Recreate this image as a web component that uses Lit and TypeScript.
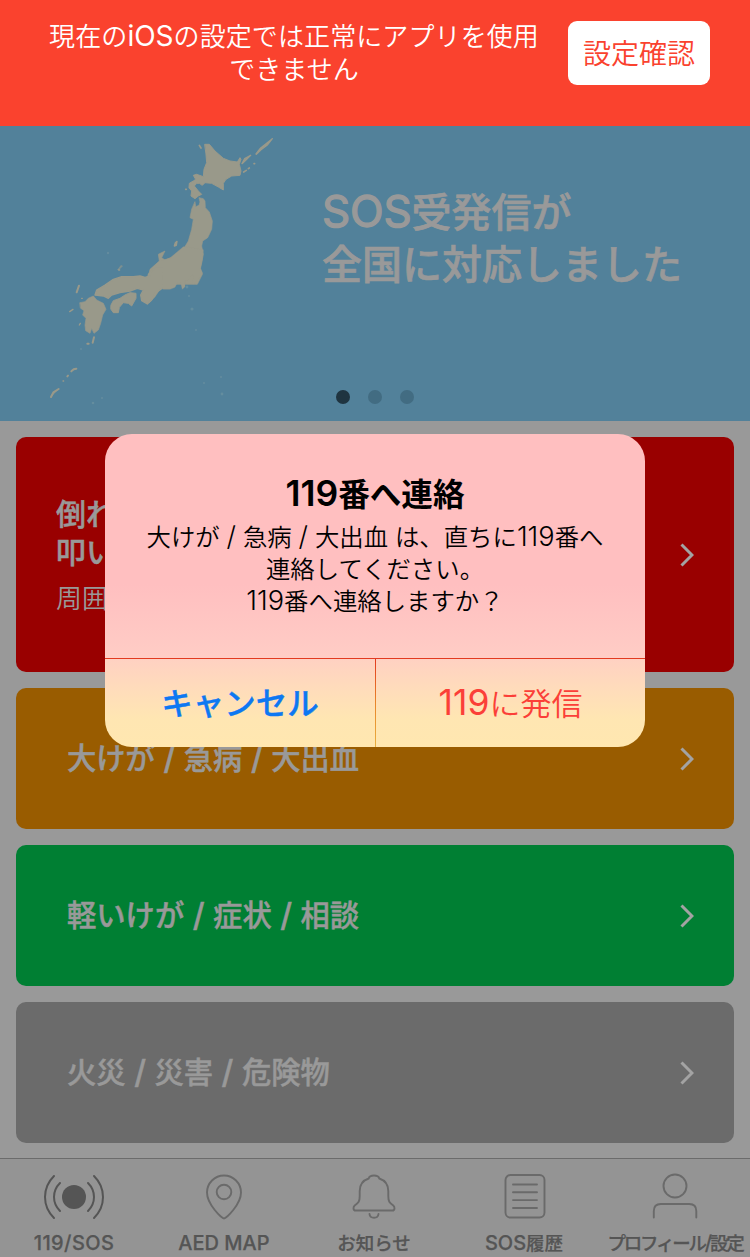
import { LitElement, html, svg, css } from "lit";
import { customElement, property } from "lit/decorators.js";

/** Splits a string into latin and Japanese runs so each can be sized on its own. */
const runs = (text: string) =>
  (text.match(/[\x20-\x7e]+|[^\x20-\x7e]+/g) ?? []).map(
    (r) => html`<span class=${/^[\x20-\x7e]/.test(r) ? "latin" : "ja"}>${r}</span>`
  );

const base = css`
  * { box-sizing: border-box; }
  .latin, .ja { white-space: pre; }
  svg { display: block; }
`;

@customElement("warning-banner")
class WarningBanner extends LitElement {
  static styles = [base, css`
    :host { display: flex; height: 126px; background: #fa422e; align-items: flex-start; }
    .msg { width: 588px; padding-top: 20px; text-align: center; color: #fff; font-size: 26px; line-height: 33px; font-weight: 350; }
    .msg .latin { font-size: 28px; font-weight: 400; }
    .msg .ja { letter-spacing: .1px; }
    .msg div { height: 33px; white-space: nowrap; }
    .btn { margin: 21px 0 0 -20px; width: 142px; height: 64px; border: 0; padding: 3px 0 0; border-radius: 9px; background: #fff; color: #fa422e; font: 350 28px/61px Inter, "Noto Sans CJK JP", sans-serif; }
  `];
  render() {
    return html`
      <div class="msg"><div>${runs("現在のiOSの設定では正常にアプリを使用")}</div><div>${runs("できません")}</div></div>
      <button class="btn">設定確認</button>`;
  }
}

@customElement("hero-slide")
class HeroSlide extends LitElement {
  static styles = [base, css`
    :host { display: grid; grid-template-columns: 322px 1fr; grid-template-rows: 264px 31px; height: 295px; background: #52819a; }
    .map { grid-row: 1 / 3; }
    .copy { padding-top: 58px; font-size: 40px; line-height: 54px; font-weight: 500; color: #999; }
    .copy div { height: 54px; white-space: nowrap; }
    .copy .ja { -webkit-text-stroke: .7px #999; }
    .copy .latin { font-size: 44px; font-weight: 400; letter-spacing: -.2px; -webkit-text-stroke: 1.3px #999; }
    .dots { grid-column: 2; display: flex; gap: 18px; padding-left: 14px; }
    .dot { width: 14px; height: 14px; border-radius: 50%; background: #426c82; }
    .dot.on { background: #1f3440; }
  `];
  render() {
    return html`
      <svg class="map" width="300" height="295" viewBox="0 126 300 295">
        <g fill="#99998a" stroke="#99998a" stroke-linejoin="round" stroke-linecap="round">
          <g transform="translate(150 126) scale(.33333)">
            <path d="M165 55l13 0 17 20 25 22 20 8 22 3 8-13 3 5-5 15 5 20-3 13-25 2-17 10-8 12v20l-15-9-20-11-20-2-8 8-9-6h-8l-7 8 12 15 10 10-10 5-10 8-12-8 2-15-8-10 1-13 12-7 7-5-7-12 10-3 20 7 2-22 8-20-2-25z" stroke-width="3"/>
            <path d="M135 228l2 14 10-4 3-10-3-13 13 3 5 7 1 20 12 13 9 27-2 25-12 25-15 10-3 15 5 25-5 25-5 20 7 15-15 30H-10L0 430l28-25-3-20 20-10-10 20 10 7 30-12 25-20 15-25 10-35 5-30-10-5 5-25z" stroke-width="2"/>
            <path d="M73 360l3-10 5-4-2 12zM276 113l8-15 18-10-15 15zM318 84l14-18 35-28-14 18-20 15-14 14z" stroke-width="4"/>
            <path d="M148 58l5 8M281 138l8-5M295 128l3-2M312 113h2M107 190h2" stroke-width="5"/>
          </g>
          <g transform="translate(150 250) scale(.33333)">
            <path d="M160 0l-3 30-5 25 6 15-10 15-18 18-5-8 8-17-8-3-10 15-10 2v18l-8 8-5-20H82l-7 14-15 6H40l-12-7-3 15-10 15-17 17-20-5L-6 72 28 34 60 24 100-10z"/>
          </g>
          <g transform="translate(30 270) scale(.33333)">
            <path d="M396 55l-21 15-10 20-13 12-17-10-3-17 8-15-18-5-22 8-30 5-25 7-10 10-15-7-25-3 5-15 25-15 25-17 25-8h35l20-2 15 4 15-4 2-13 14-10 20 0z" stroke-width="4"/>
            <path d="M243 105l7-13 20-7 15-10 15-7 18 2v15l-13 23-10-8-15-2-12 14-3 16h-15l-7-10z" stroke-width="3"/>
            <path d="M150 98l15-3 10-10 15-7 10 12 20 10 8 18-10 17-6 25-7 20-13 10-7-15-5 15-13-8-2-17 3-20-10-10 4-13-10-7z" stroke-width="2"/>
            <path d="M140 67l7-20M63 381l7-14 16-10M112 319l2-2M124 304l7-6 8-2M188 218l4-16M172 221h4" stroke-width="6"/>
            <path d="M119 125l10-7M148 165l3-5M155 85h2M99 333h2M266 0h3" stroke-width="4"/>
          </g>
        </g>
        <g fill="#7095a2" opacity=".6">
          <circle cx="187" cy="287" r="1.4"/><circle cx="192" cy="309" r="1.6"/><circle cx="189" cy="296" r="1"/>
          <circle cx="196" cy="330" r=".9"/><circle cx="204" cy="383" r="1"/><circle cx="222" cy="394" r="1.4"/><circle cx="221" cy="377" r="1"/>
          <circle cx="93" cy="403" r="1.3"/><circle cx="102" cy="398" r="1"/><circle cx="81" cy="349" r="1"/>
          <circle cx="108" cy="253" r="1.2"/><path d="M117 270l4-5 2 1-4 4z" fill="#99998a"/>
        </g>
      </svg>
      <div class="copy"><div>${runs("SOS受発信が")}</div><div>${runs("全国に対応しました")}</div></div>
      <div class="dots"><i class="dot on"></i><i class="dot"></i><i class="dot"></i></div>`;
  }
}

@customElement("menu-card")
class MenuCard extends LitElement {
  @property() tone = "";
  static styles = [base, css`
    :host { display: block; }
    .card { display: flex; align-items: center; justify-content: space-between; height: 141px; border-radius: 10px; padding: 0 40px 0 51px; color: #999; font-size: 29.3px; font-weight: 500; white-space: nowrap; -webkit-text-stroke: .5px #999; }
    .red { height: 235px; background: #990000; padding-left: 40px; }
    .orange { background: #995c00; }
    .green { background: #007f33; }
    .grey { background: #6b6b6b; }
  `];
  render() {
    return html`<div class="card ${this.tone}"><slot></slot>
      <svg width="14" height="24" viewBox="0 0 14 24" fill="none" stroke="#a3a3a3" stroke-width="3"><path d="M1.5 1.5L12 12 1.5 22.5"/></svg>
    </div>`;
  }
}

@customElement("call-dialog")
class CallDialog extends LitElement {
  static styles = [base, css`
    :host { display: block; }
    .box { width: 540px; height: 313px; border-radius: 27px; overflow: hidden; text-align: center; color: #000;
      background: linear-gradient(180deg, #ffbfc0 0, #ffbfc0 150px, #ffc9c4 205px, #ffcdc5 224px, #ffd1c2 225px, #ffdcbb 255px, #ffe6b2 285px, #ffe7b0 313px); }
    .body { height: 224px; padding-top: 39px; }
    .title { height: 42px; line-height: 42px; font-size: 31.6px; font-weight: 700; white-space: nowrap; }
    .title .ja { font-weight: 700; }
    .title .latin { font-size: 35.5px; font-weight: 600; }
    .line { height: 32px; line-height: 32px; font-size: 24.4px; font-weight: 350; white-space: nowrap; }
    .line:nth-child(2) { margin-top: 6px; }
    .line .latin { font-size: 27.2px; font-weight: 350; word-spacing: -.8px; }
    .actions { display: grid; grid-template-columns: 270px 1px 269px; height: 89px; border-top: 1px solid #e23a20; }
    .sep { background: linear-gradient(#e23a20, #e8862a 50%, #e8b040); }
    .act { background: none; border: 0; padding: 0; font: 500 31.5px/88px Inter, "Noto Sans CJK JP", sans-serif; color: #0d78f2; white-space: nowrap; }
    .cancel { -webkit-text-stroke: .4px #0d78f2; }
    .call { color: #fb3f38; font-weight: 350; font-size: 31px; }
    .call .latin { font-size: 35.5px; font-weight: 400; }
  `];
  render() {
    return html`<div class="box" role="dialog">
      <div class="body">
        <div class="title">${runs("119番へ連絡")}</div>
        <div class="line">${runs("大けが / 急病 / 大出血 は、直ちに119番へ")}</div>
        <div class="line">${runs("連絡してください。")}</div>
        <div class="line">${runs("119番へ連絡しますか？")}</div>
      </div>
      <div class="actions">
        <button class="act cancel">${runs("キャンセル")}</button><i class="sep"></i><button class="act call">${runs("119に発信")}</button>
      </div>
    </div>`;
  }
}

const tabs = [
  { label: "119/SOS", cls: "sos", icon: svg`<g stroke="#555" stroke-width="2"><circle cx="34" cy="24" r="12" fill="#555" stroke="none"/><path d="M20 10c-8 8-8 20 0 28M14 3c-12 12-12 30 0 42M48 10c8 8 8 20 0 28M54 3c12 12 12 30 0 42"/></g>` },
  { label: "AED MAP", cls: "aed", icon: svg`<path d="M34 45.5c-2 0-17-14-17-26a17 17 0 0 1 34 0c0 12-15 26-17 26z"/><circle cx="34" cy="19" r="7.3"/>` },
  { label: "お知らせ", cls: "news", icon: svg`<path d="M15.500 37.500h37c2.500 0 2.500-3.500.8-5-4-3-5-4-5-9.500v-5c0-6-3-10.500-9-12.500-1-4-9.600-4-10.600 0-6 2-9 6.500-9 12.500v5c0 5.500-1 6.500-5 9.500-1.700 1.500-1.700 5 .8 5zM29.500 41c.5 5 8.500 5 9 0"/>` },
  { label: "SOS履歴", cls: "log", icon: svg`<rect x="14.500" y="2" width="39" height="42.500" rx="5"/><path d="M22 11.500h24M22 19.300h24M22 27.100h24M22 35h24"/>` },
  { label: "プロフィール/設定", cls: "me", icon: svg`<circle cx="34" cy="13" r="11.500"/><path d="M12.800 44.500V38c0-5 3-7 7-7h28.500c4 0 7 2 7 7v6.500"/>` },
];

@customElement("tab-bar")
class TabBar extends LitElement {
  static styles = [base, css`
    :host { display: grid; grid-template-columns: repeat(5, 150px); height: 99px; border-top: 1px solid #6b6b6b; background: #949494; color: #555; }
    .tab { display: flex; flex-direction: column; align-items: center; padding-top: 14px; width: 148px; }
    .log, .me { width: 150px; }
    .tab svg { fill: none; stroke: #6a6a6a; stroke-width: 1.9; stroke-linecap: round; stroke-linejoin: round; }
    .label { margin-top: 9px; height: 26px; line-height: 26px; font-size: 18.500px; font-weight: 500; white-space: nowrap; -webkit-text-stroke: .25px #555; }
    .label .latin { font-size: 20px; font-weight: 450; }
    .sos .latin { letter-spacing: .4px; }
    .log .label { margin-left: -2px; }
    .me .label { letter-spacing: -2.200px; }
  `];
  render() {
    return tabs.map((t) => html`<div class="tab ${t.cls}">
      <svg width="68" height="48" viewBox="0 0 68 48">${t.icon}</svg>
      <div class="label">${runs(t.label)}</div></div>`);
  }
}

@customElement("app-root")
class AppRoot extends LitElement {
  static styles = [base, css`
    :host { display: flex; flex-direction: column; position: relative; width: 750px; height: 1257px; overflow: hidden; background: #999; font-family: Inter, "Noto Sans CJK JP", sans-serif; }
    .list { flex: 1; display: flex; flex-direction: column; gap: 16px; padding: 16px 16px 0; }
    .name { padding-bottom: 5px; }
    .name .latin { font-size: 32px; }
    .lead { font-size: 30px; line-height: 38px; font-weight: 500; height: 120px; }
    .lead div { height: 38px; }
    .lead .sub { margin-top: 11px; font-size: 26px; line-height: 34px; font-weight: 350; -webkit-text-stroke: 0; }
    .overlay { position: absolute; left: 105px; top: 434px; }
  `];
  render() {
    return html`
      <warning-banner></warning-banner>
      <hero-slide></hero-slide>
      <div class="list">
        <menu-card tone="red"><div class="lead"><div>倒れ</div><div>叩い</div><div class="sub">周囲</div></div></menu-card>
        <menu-card tone="orange"><div class="name">${runs("大けが / 急病 / 大出血")}</div></menu-card>
        <menu-card tone="green"><div class="name">${runs("軽いけが / 症状 / 相談")}</div></menu-card>
        <menu-card tone="grey"><div class="name">${runs("火災 / 災害 / 危険物")}</div></menu-card>
      </div>
      <tab-bar></tab-bar>
      <call-dialog class="overlay"></call-dialog>`;
  }
}
